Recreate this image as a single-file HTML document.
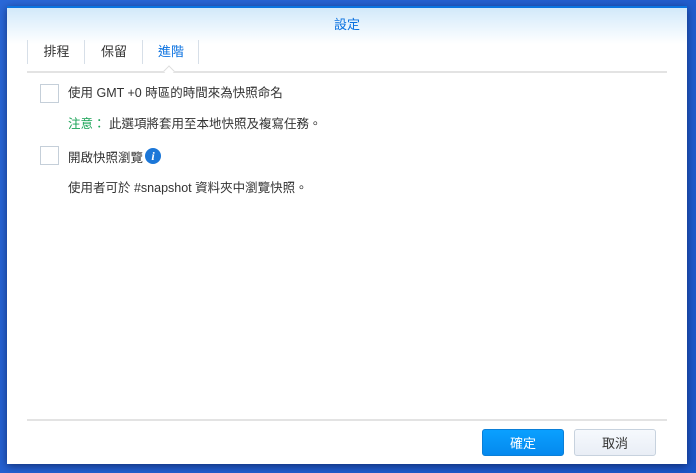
<!DOCTYPE html>
<html><head><meta charset="utf-8"><style>
body{margin:0;width:696px;height:473px;background:#1f5fd0;position:relative;overflow:hidden;font-family:"Liberation Sans","Noto Sans CJK TC",sans-serif;font-size:12px;color:#333}
.bg{position:absolute;inset:0;background:linear-gradient(135deg,#2a68d8,#1c56c8)}
.win{position:absolute;left:7px;top:6px;width:680px;height:458px;background:#fff;box-shadow:0 2px 8px rgba(0,0,30,.5)}
.top{position:absolute;left:0;top:0;width:680px;height:2px;background:#0b74e0}
.hdr{position:absolute;left:0;top:2px;width:680px;height:36px;background:linear-gradient(#d2e9fa,#fff)}
.title{position:absolute;left:0;width:680px;top:8px;text-align:center;color:#0a71e0;font-size:13px}
.tab{position:absolute;top:34px;height:24px;line-height:24px;text-align:center;font-size:13px;border-left:1px solid #d7dfe8}
.line{position:absolute;left:20px;width:640px;height:2px;background:#e3e3e3}
.cb{position:absolute;width:17px;height:17px;border:1px solid #c5cfd9;background:#fff}
.t{position:absolute;font-size:12.5px;color:#333}
.btn{position:absolute;top:423px;height:27px;line-height:27px;text-align:center;font-size:13px;border-radius:3px}
</style></head><body><div class="bg"></div>
<div class="win">
<div class="top"></div><div class="hdr"></div>
<div class="title">設定</div>
<div class="tab" style="left:20px;width:57px">排程</div>
<div class="tab" style="left:77px;width:58px">保留</div>
<div class="tab" style="left:135px;width:56px;color:#0a71e0">進階</div>
<div class="tab" style="left:191px;width:1px"></div>
<div class="line" style="top:65px"></div>
<div style="position:absolute;left:158px;top:61px;width:7px;height:7px;background:#fff;border-left:1px solid #ddd;border-top:1px solid #ddd;transform:rotate(45deg)"></div>
<div class="cb" style="left:33px;top:78px"></div>
<div class="t" style="left:61px;top:76px">使用 GMT +0 時區的時間來為快照命名</div>
<div class="t" style="left:61px;top:107px"><span style="color:#19a356">注意：</span> 此選項將套用至本地快照及複寫任務。</div>
<div class="cb" style="left:33px;top:140px"></div>
<div class="t" style="left:61px;top:141px">開啟快照瀏覽</div>
<div style="position:absolute;left:138px;top:142px;width:16px;height:16px;border-radius:50%;background:#1c77d8;color:#fff;font:italic bold 12px 'Liberation Serif',serif;text-align:center;line-height:16px">i</div>
<div class="t" style="left:61px;top:171px">使用者可於 #snapshot 資料夾中瀏覽快照。</div>
<div class="line" style="top:413px"></div>
<div class="btn" style="left:475px;width:82px;background:linear-gradient(#0aa0ff,#0589ee);color:#fff;border:1px solid #0a7fd8;box-sizing:border-box">確定</div>
<div class="btn" style="left:567px;width:82px;background:linear-gradient(#f6f9fd,#e9eef6);border:1px solid #c7d2de;box-sizing:border-box">取消</div>
</div>
</body></html>
